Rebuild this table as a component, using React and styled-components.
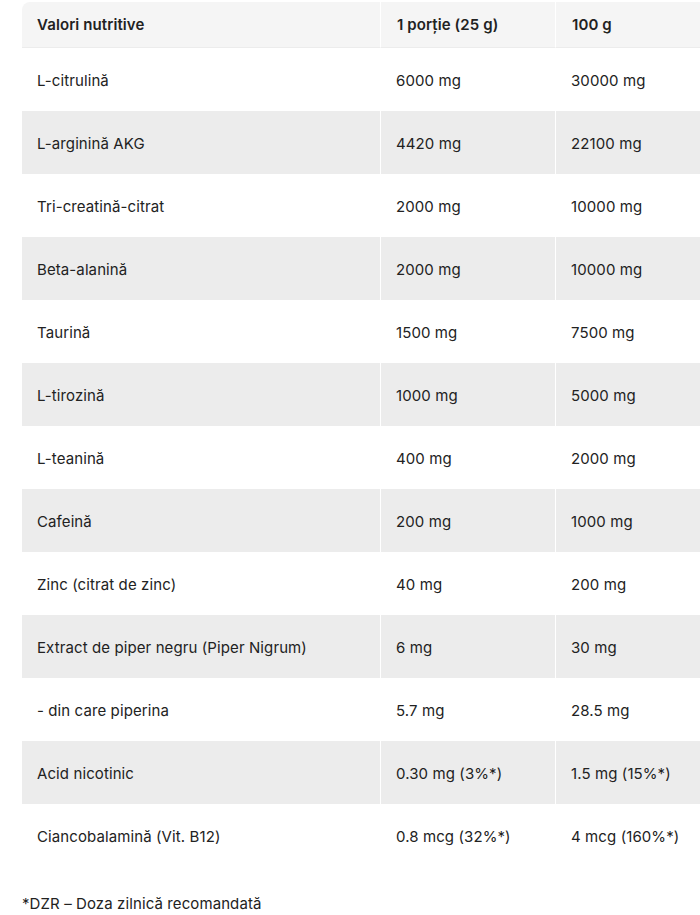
import React from 'react';
import styled, { createGlobalStyle } from 'styled-components';

const GlobalStyle = createGlobalStyle`
  html, body {
    margin: 0;
    padding: 0;
    background: #fff;
    overflow: hidden;
  }

  body {
    font-family: Inter, "Noto Sans", sans-serif;
    color: #222;
    letter-spacing: 0.1px;
  }
`;

const Wrapper = styled.div`
  width: 700px;
  padding: 2px 0 0 22px;
  box-sizing: border-box;
  overflow: hidden;
`;

const Table = styled.table`
  width: 740px;
  table-layout: fixed;
  border-collapse: separate;
  border-spacing: 0;
  font-size: 15px;
`;

const HeadCell = styled.th`
  background: #f5f5f5;
  height: 46px;
  padding: 0 16px;
  text-align: left;
  font-weight: 600;
  border-left: ${(p) => (p.$first ? 'none' : '1px solid #fff')};
  border-bottom: 1px solid #ececec;
  box-sizing: border-box;
  border-top-left-radius: ${(p) => (p.$first ? '8px' : '0')};

  &:first-child {
    padding-left: 15px;
  }
`;

const Row = styled.tr`
  background: ${(p) => (p.$striped ? '#ececec' : '#fff')};
`;

const Cell = styled.td`
  height: 63px;
  padding: 1px 16px 0 15px;
  box-sizing: border-box;
  font-weight: 400;
  border-left: 1px solid #fff;
  white-space: nowrap;

  &:first-child {
    border-left: none;
    padding-left: 15px;
  }
`;

const Note = styled.p`
  margin: 28px 0 0;
  font-size: 15px;
  line-height: 18px;
`;

const rows = [
  ['L-citrulină', '6000 mg', '30000 mg'],
  ['L-arginină AKG', '4420 mg', '22100 mg'],
  ['Tri-creatină-citrat', '2000 mg', '10000 mg'],
  ['Beta-alanină', '2000 mg', '10000 mg'],
  ['Taurină', '1500 mg', '7500 mg'],
  ['L-tirozină', '1000 mg', '5000 mg'],
  ['L-teanină', '400 mg', '2000 mg'],
  ['Cafeină', '200 mg', '1000 mg'],
  ['Zinc (citrat de zinc)', '40 mg', '200 mg'],
  ['Extract de piper negru (Piper Nigrum)', '6 mg', '30 mg'],
  ['- din care piperina', '5.7 mg', '28.5 mg'],
  ['Acid nicotinic', '0.30 mg (3%*)', '1.5 mg (15%*)'],
  ['Ciancobalamină (Vit. B12)', '0.8 mcg (32%*)', '4 mcg (160%*)'],
];

export default function App() {
  return (
    <>
      <GlobalStyle />
      <Wrapper>
        <Table>
          <colgroup>
            <col style={{ width: 358 }} />
            <col style={{ width: 175 }} />
            <col />
          </colgroup>
          <thead>
            <tr>
              <HeadCell $first>Valori nutritive</HeadCell>
              <HeadCell>1 porție (25 g)</HeadCell>
              <HeadCell>100 g</HeadCell>
            </tr>
          </thead>
          <tbody>
            {rows.map(([name, portion, hundred], i) => (
              <Row key={name} $striped={i % 2 === 1}>
                <Cell>{name}</Cell>
                <Cell>{portion}</Cell>
                <Cell>{hundred}</Cell>
              </Row>
            ))}
          </tbody>
        </Table>
        <Note>*DZR – Doza zilnică recomandată</Note>
      </Wrapper>
    </>
  );
}
